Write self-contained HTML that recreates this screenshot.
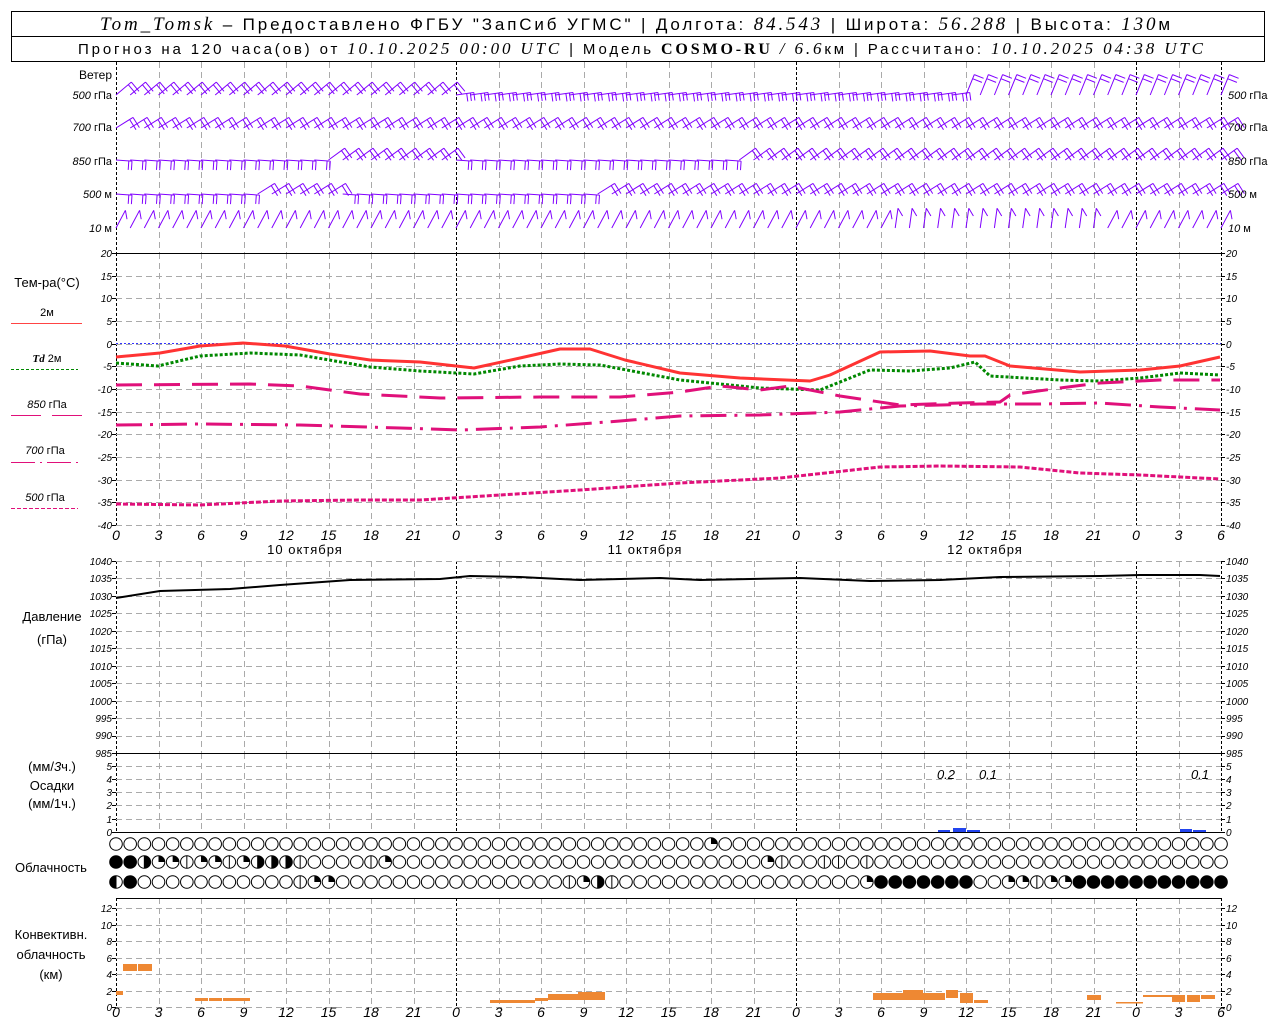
<!DOCTYPE html>
<html><head><meta charset="utf-8">
<style>
html,body{margin:0;padding:0;background:#fff;}
svg{display:block;}
.t{font-family:"Liberation Sans",sans-serif;fill:#000;}
.n{font-family:"Liberation Sans",sans-serif;font-style:italic;font-size:10px;fill:#000;}
.xl{font-family:"Liberation Sans",sans-serif;font-style:italic;font-size:14px;fill:#000;text-anchor:middle;}
.i{font-family:"Liberation Serif",serif;font-style:italic;}
</style></head><body>
<svg id="s" width="1280" height="1024" viewBox="0 0 1280 1024" xmlns="http://www.w3.org/2000/svg">
<rect x="11.5" y="11.5" width="1253" height="50" fill="#fff" stroke="#000"/>
<line x1="11" y1="36.5" x2="1265" y2="36.5" stroke="#000"/>
<g id="grid"></g>
<g id="data"></g>
<text class="t" x="100" y="30" font-size="17" textLength="1070" lengthAdjust="spacing"><tspan class="i" font-size="19">Tom_Tomsk</tspan> – Предоставлено ФГБУ "ЗапСиб УГМС" | Долгота: <tspan class="i" font-size="19">84.543</tspan> | Широта: <tspan class="i" font-size="19">56.288</tspan> | Высота: <tspan class="i" font-size="19">130</tspan>м</text>
<text class="t" x="78" y="54" font-size="15" textLength="1125" lengthAdjust="spacing">Прогноз на 120 часа(ов) от <tspan class="i" font-size="17">10.10.2025 00:00 UTC</tspan>  | Модель <tspan font-family="Liberation Serif" font-weight="bold" font-size="16">COSMO-RU</tspan> <tspan class="i" font-size="17">/ 6.6</tspan>км | Рассчитано: <tspan class="i" font-size="17">10.10.2025 04:38 UTC</tspan></text>

<g class="t" font-size="11">
<text x="112" y="79" text-anchor="end" font-size="12">Ветер</text>
<text x="112" y="99" text-anchor="end"><tspan font-style="italic">500</tspan> гПа</text>
<text x="112" y="131" text-anchor="end"><tspan font-style="italic">700</tspan> гПа</text>
<text x="112" y="165" text-anchor="end"><tspan font-style="italic">850</tspan> гПа</text>
<text x="112" y="198" text-anchor="end"><tspan font-style="italic">500</tspan> м</text>
<text x="112" y="232" text-anchor="end"><tspan font-style="italic">10</tspan>   м</text>
<text x="1228" y="99"><tspan font-style="italic">500</tspan> гПа</text>
<text x="1228" y="131"><tspan font-style="italic">700</tspan> гПа</text>
<text x="1228" y="165"><tspan font-style="italic">850</tspan> гПа</text>
<text x="1228" y="198"><tspan font-style="italic">500</tspan> м</text>
<text x="1228" y="232"><tspan font-style="italic">10</tspan>   м</text>
</g>
<g class="t" font-size="13" text-anchor="middle">
<text x="47" y="287">Тем-ра(°C)</text>
<text x="47" y="316" font-size="11">2м</text>
<text x="47" y="362" font-size="11"><tspan font-style="italic" font-weight="bold" font-family="Liberation Serif">Td</tspan>  2м</text>
<text x="47" y="408" font-size="11"><tspan font-style="italic">850</tspan> гПа</text>
<text x="45" y="454" font-size="11"><tspan font-style="italic">700</tspan> гПа</text>
<text x="45" y="501" font-size="11"><tspan font-style="italic">500</tspan> гПа</text>
<text x="52" y="621">Давление</text>
<text x="52" y="644">(гПа)</text>
<text x="52" y="771">(мм/<tspan font-style="italic">3</tspan>ч.)</text>
<text x="52" y="790">Осадки</text>
<text x="52" y="808">(мм/1ч.)</text>
<text x="51" y="872">Облачность</text>
<text x="51" y="939">Конвективн.</text>
<text x="51" y="959">облачность</text>
<text x="51" y="979">(км)</text>
</g>
<g stroke-width="1">
<line x1="11" y1="323.5" x2="82" y2="323.5" stroke="#f44"/>
<line x1="11" y1="369.5" x2="78" y2="369.5" stroke="#080" stroke-dasharray="3,2"/>
<line x1="11" y1="415.5" x2="41" y2="415.5" stroke="#e0107a"/><line x1="52" y1="415.5" x2="82" y2="415.5" stroke="#e0107a"/>
<line x1="11" y1="462.5" x2="78" y2="462.5" stroke="#e0107a" stroke-dasharray="24,5,2,5"/>
<line x1="11" y1="508.5" x2="78" y2="508.5" stroke="#e0107a" stroke-dasharray="4,2"/>
</g>

<g class="xl">
<text x="116" y="540">0</text><text x="158.5" y="540">3</text><text x="201" y="540">6</text><text x="243.5" y="540">9</text><text x="286" y="540">12</text><text x="328.5" y="540">15</text><text x="371" y="540">18</text><text x="413.5" y="540">21</text><text x="456" y="540">0</text><text x="498.5" y="540">3</text><text x="541" y="540">6</text><text x="583.5" y="540">9</text><text x="626" y="540">12</text><text x="668.5" y="540">15</text><text x="711" y="540">18</text><text x="753.5" y="540">21</text><text x="796" y="540">0</text><text x="838.5" y="540">3</text><text x="881" y="540">6</text><text x="923.5" y="540">9</text><text x="966" y="540">12</text><text x="1008.5" y="540">15</text><text x="1051" y="540">18</text><text x="1093.5" y="540">21</text><text x="1136" y="540">0</text><text x="1178.5" y="540">3</text><text x="1221" y="540">6</text>
</g>
<g class="xl">
<text x="116" y="1017">0</text><text x="158.5" y="1017">3</text><text x="201" y="1017">6</text><text x="243.5" y="1017">9</text><text x="286" y="1017">12</text><text x="328.5" y="1017">15</text><text x="371" y="1017">18</text><text x="413.5" y="1017">21</text><text x="456" y="1017">0</text><text x="498.5" y="1017">3</text><text x="541" y="1017">6</text><text x="583.5" y="1017">9</text><text x="626" y="1017">12</text><text x="668.5" y="1017">15</text><text x="711" y="1017">18</text><text x="753.5" y="1017">21</text><text x="796" y="1017">0</text><text x="838.5" y="1017">3</text><text x="881" y="1017">6</text><text x="923.5" y="1017">9</text><text x="966" y="1017">12</text><text x="1008.5" y="1017">15</text><text x="1051" y="1017">18</text><text x="1093.5" y="1017">21</text><text x="1136" y="1017">0</text><text x="1178.5" y="1017">3</text><text x="1221" y="1017">6</text>
</g>
<g class="t" font-size="13" text-anchor="middle" letter-spacing="1">
<text x="305" y="554">10 октября</text><text x="645" y="554">11 октября</text><text x="985" y="554">12 октября</text>
</g>

<g class="n" text-anchor="end">
<text x="112" y="257">20</text><text x="112" y="280">15</text><text x="112" y="302">10</text><text x="112" y="325">5</text><text x="112" y="348">0</text><text x="112" y="370">-5</text><text x="112" y="393">-10</text><text x="112" y="416">-15</text><text x="112" y="438">-20</text><text x="112" y="461">-25</text><text x="112" y="484">-30</text><text x="112" y="506">-35</text><text x="112" y="529">-40</text>
<text x="112" y="565">1040</text><text x="112" y="582">1035</text><text x="112" y="600">1030</text><text x="112" y="617">1025</text><text x="112" y="635">1020</text><text x="112" y="652">1015</text><text x="112" y="670">1010</text><text x="112" y="687">1005</text><text x="112" y="705">1000</text><text x="112" y="722">995</text><text x="112" y="739">990</text><text x="112" y="757">985</text>
<text x="112" y="836">0</text><text x="112" y="823">1</text><text x="112" y="809">2</text><text x="112" y="796">3</text><text x="112" y="783">4</text><text x="112" y="770">5</text>
<text x="112" y="1011">0</text><text x="112" y="995">2</text><text x="112" y="978">4</text><text x="112" y="962">6</text><text x="112" y="945">8</text><text x="112" y="929">10</text><text x="112" y="912">12</text>
</g>
<g class="n">
<text x="1226" y="257">20</text><text x="1226" y="280">15</text><text x="1226" y="302">10</text><text x="1226" y="325">5</text><text x="1226" y="348">0</text><text x="1226" y="370">-5</text><text x="1226" y="393">-10</text><text x="1226" y="416">-15</text><text x="1226" y="438">-20</text><text x="1226" y="461">-25</text><text x="1226" y="484">-30</text><text x="1226" y="506">-35</text><text x="1226" y="529">-40</text>
<text x="1226" y="565">1040</text><text x="1226" y="582">1035</text><text x="1226" y="600">1030</text><text x="1226" y="617">1025</text><text x="1226" y="635">1020</text><text x="1226" y="652">1015</text><text x="1226" y="670">1010</text><text x="1226" y="687">1005</text><text x="1226" y="705">1000</text><text x="1226" y="722">995</text><text x="1226" y="739">990</text><text x="1226" y="757">985</text>
<text x="1226" y="836">0</text><text x="1226" y="823">1</text><text x="1226" y="809">2</text><text x="1226" y="796">3</text><text x="1226" y="783">4</text><text x="1226" y="770">5</text>
<text x="1226" y="1011">0</text><text x="1226" y="995">2</text><text x="1226" y="978">4</text><text x="1226" y="962">6</text><text x="1226" y="945">8</text><text x="1226" y="929">10</text><text x="1226" y="912">12</text>
</g>
<g class="t" font-size="13" font-style="italic" text-anchor="middle">
<text x="946" y="779">0.2</text><text x="988" y="779">0.1</text><text x="1200" y="779">0.1</text>
</g>
</svg>
<script>
(function(){
var NS="http://www.w3.org/2000/svg";
var G=document.getElementById("grid"),D=document.getElementById("data");
function el(p,tag,a){var e=document.createElementNS(NS,tag);for(var k in a)e.setAttribute(k,a[k]);p.appendChild(e);return e;}
function X(h){return 116+h*14.167;}
function hl(y,x1,x2,st,da){el(G,"line",{x1:x1,y1:y,x2:x2,y2:y,stroke:st,"stroke-dasharray":da||""});}
var panels=[[62,253],[253,525],[561,753],[753,832],[898,1007]];
panels.forEach(function(p){
 for(var i=0;i<=26;i++){var x=Math.round(X(i*3))+0.5;var day=(i%8==0)||i==26;
  el(G,"line",{x1:x,y1:p[0],x2:x,y2:p[1],stroke:day?"#000":"#aaa","stroke-dasharray":day?"3,2":"6,4"});}
});
function hgrid(y0,y1,n){for(var k=0;k<=n;k++){var y=Math.round(y0+(y1-y0)*k/n)+0.5;hl(y,116,1221,"#aaa","6,4");
 el(G,"line",{x1:112,y1:y,x2:116,y2:y,stroke:"#000"});el(G,"line",{x1:1221,y1:y,x2:1225,y2:y,stroke:"#000"});}}
hgrid(253,525,12);hgrid(561,753,11);hgrid(832,765.5,5);hgrid(1007,908,6);
hl(253.5,116,1221,"#000");hl(753.5,116,1221,"#000");hl(832.5,116,1221,"#000");hl(898.5,116,1221,"#000");hl(343.5,116,1221,"#33f","2,2");
// wind barbs
var rows=[95,128,160,194,228];
for(var r=0;r<5;r++){
 var y0=rows[r];
 for(var i=0;i<=78;i++){
  var x=X(i),a,L=20,nf=2,fl=12;
  if(r==0){if(i<24){a=40;}else if(i<60){a=8;L=18;nf=3;fl=8;}else{a=68;L=22;fl=10;}}
  else if(r==1){a=32;}
  else if(r==2){if(i<15||(i>=24&&i<44)){a=-4;nf=2;fl=9;L=16;}else a=36;}
  else if(r==3){if(i<10||(i>=16&&i<34)){a=-4;nf=2;fl=9;L=16;}else a=32;}
  else {a=(i>54&&i<70)?82:62;L=20;nf=1;fl=9;}
  var yy=y0;
  var rad=a*Math.PI/180,cx=Math.cos(rad),sy=Math.sin(rad);
  var ex=x+L*cx,ey=yy-L*sy;
  var d="M"+x.toFixed(1)+" "+yy+"L"+ex.toFixed(1)+" "+ey.toFixed(1);
  for(var f=0;f<nf;f++){var t=1-f*0.2;var px=x+L*t*cx,py=yy-L*t*sy;
   var fa=(r==4)?rad-0.9:rad;
   d+="M"+px.toFixed(1)+" "+py.toFixed(1)+"l"+(fl*Math.sin(fa)).toFixed(1)+" "+(fl*Math.cos(fa)).toFixed(1);}
  el(D,"path",{d:d,stroke:"#8000ff",fill:"none","stroke-width":1});
 }
}
function line(p,st,w,da){var d="";p.forEach(function(q,k){d+=(k?"L":"M")+q[0]+" "+q[1];});
 el(D,"path",{d:d,stroke:st,"stroke-width":w,fill:"none","stroke-dasharray":da||"","stroke-linejoin":"round"});}
line([[116,357],[160,353],[200,346],[243,343],[285,346],[330,354],[370,360],[420,362],[474,368],[520,358],[560,349],[590,349],[625,360],[680,373],[740,378],[810,381],[830,375],[880,352],[930,351],[970,356],[985,356],[1010,366],[1080,372],[1140,370],[1180,366],[1220,357]],"#f33",3);
line([[116,363],[158,366],[200,356],[250,353],[300,355],[370,367],[420,371],[474,374],[520,366],[560,364],[600,365],[680,380],[760,388],[820,390],[870,370],[910,371],[950,368],[975,362],[990,376],[1060,380],[1100,381],[1140,378],[1180,373],[1220,375]],"#080",3,"3,2");
line([[116,385],[250,384],[300,386],[360,394],[440,398],[540,397],[620,397],[680,392],[720,386],[760,390],[790,386],[840,396],[900,405],[960,403],[1000,402],[1010,395],[1060,388],[1100,383],[1160,380],[1220,380]],"#e0107a",3,"26,12");
line([[116,425],[200,424],[300,425],[400,428],[460,430],[540,427],[620,421],[680,416],[760,415],[840,412],[900,406],[980,404],[1040,404],[1100,403],[1160,407],[1220,410]],"#e0107a",3,"26,8,3,8");
line([[116,504],[200,505],[280,501],[360,500],[420,500],[500,495],[580,490],[680,483],[780,478],[880,467],[940,466],[1020,467],[1080,473],[1140,475],[1220,479]],"#e0107a",3,"5,2");
line([[116,598],[160,591],[230,589],[280,585],[350,580],[440,579],[470,576],[520,577],[580,580],[660,578],[700,580],[800,578],[870,581],[940,580],[1000,577],[1100,576],[1140,575],[1200,575],[1220,576]],"#000",2);
[[938,830,12,2],[953,828,13,4],[967,830,13,2],[1180,829,12,3],[1193,830,13,2]].forEach(function(b){el(D,"rect",{x:b[0],y:b[1],width:b[2],height:b[3],fill:"#2244ee"});});
[[116,991,7,4],[123,964,14,7],[138,964,14,7],[195,998,13,3],[209,998,13,3],[223,998,27,3],[490,1000,45,3],[535,998,13,3],[548,994,30,6],[578,992,27,8],[873,993,30,7],[903,990,20,10],[923,993,22,7],[946,990,12,8],[960,993,13,10],[974,1000,14,3],[1087,995,14,5],[1116,1002,27,1.5],[1143,995,29,2],[1172,995,13,7],[1187,995,13,7],[1201,995,14,4]].forEach(function(b){el(D,"rect",{x:b[0],y:b[1],width:b[2],height:b[3],fill:"#ee8833"});});
var R=[{42:"q"},{0:"f",1:"f",2:"h",3:"q",4:"q",5:"l",6:"q",7:"q",8:"l",9:"q",10:"h",11:"h",12:"h",13:"l",18:"l",19:"q",46:"q",47:"l",50:"l",51:"l",53:"l"},{0:"H",1:"f",13:"l",14:"q",15:"q",32:"l",33:"q",34:"h",35:"l",53:"q",63:"q",64:"q",65:"l",66:"q",67:"q"}];
for(var k=54;k<=60;k++)R[2][k]="f";for(k=68;k<=78;k++)R[2][k]="f";
var cy=[844,862,882],rr=6.3;
for(var r2=0;r2<3;r2++)for(var i2=0;i2<=78;i2++){
 var cx2=X(i2),c=cy[r2],v=R[r2][i2]||"0";
 el(D,"circle",{cx:cx2,cy:c,r:rr,fill:v=="f"?"#000":"#fff",stroke:"#000","stroke-width":1});
 if(v=="q")el(D,"path",{d:"M"+cx2+" "+c+"V"+(c-rr)+"A"+rr+" "+rr+" 0 0 1 "+(cx2+rr)+" "+c+"Z",fill:"#000"});
 if(v=="h")el(D,"path",{d:"M"+cx2+" "+(c-rr)+"A"+rr+" "+rr+" 0 0 1 "+cx2+" "+(c+rr)+"Z",fill:"#000"});
 if(v=="H")el(D,"path",{d:"M"+cx2+" "+(c-rr)+"A"+rr+" "+rr+" 0 0 0 "+cx2+" "+(c+rr)+"Z",fill:"#000"});
 if(v=="l"||v=="H"||v=="h")el(D,"line",{x1:cx2,y1:c-rr,x2:cx2,y2:c+rr,stroke:"#000"});
}
})();
</script>
</body></html>
